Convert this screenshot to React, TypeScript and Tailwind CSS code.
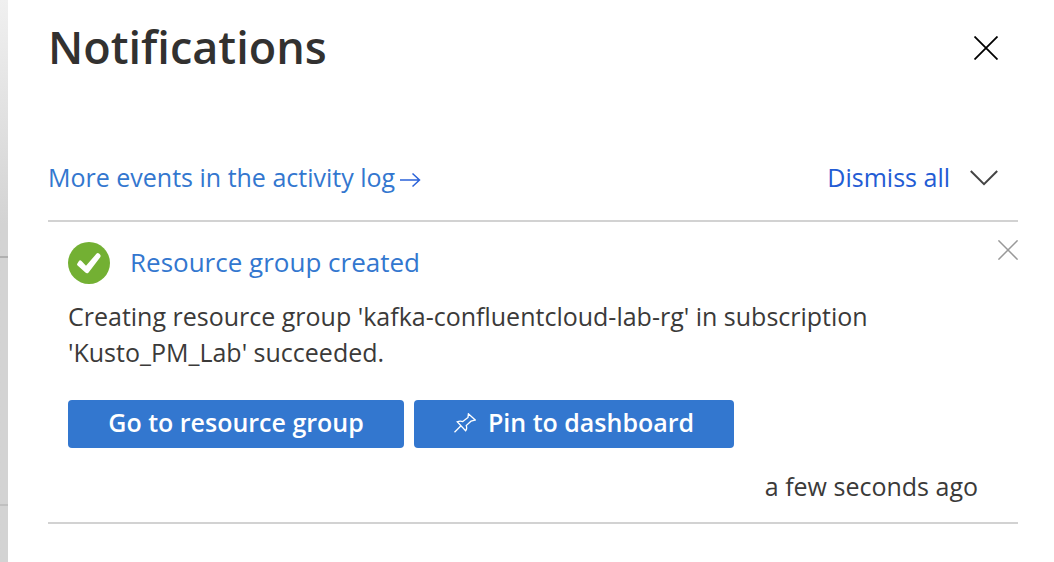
function CloseIcon({ className }: { className: string }) {
  return (
    <svg viewBox="0 0 24 24" className={className} fill="none" stroke="currentColor" aria-hidden="true">
      <path d="M0.5 0.5 23.5 23.5M23.5 0.5 0.5 23.5" strokeWidth="1.8" />
    </svg>
  );
}

function SuccessIcon() {
  return (
    <svg viewBox="0 0 42 42" className="size-[42px] shrink-0" role="img" aria-label="Success">
      <circle cx="21" cy="21" r="21" fill="#73b033" />
      <path
        d="M9.4 21.6 10.8 19.2Q12 17.6 13.5 19L18 23.8 28.4 11.8Q29.6 10.4 31 11.6L32 12.6Q33.2 13.8 32.2 15.2L20.6 30.4Q19 32.2 17.4 30.6L9.6 23.6Q8.6 22.6 9.4 21.6Z"
        fill="#fff"
      />
    </svg>
  );
}

function PinIcon() {
  return (
    <svg viewBox="0 0 22 20" className="h-5 w-[22px]" fill="none" stroke="currentColor" strokeWidth="1.3" aria-hidden="true">
      <path d="M0.5 19.3 7 12.8M3.2 8.8Q6 7.6 8.8 8.6L14 4.4 14.4 0.8 21.2 7 17 8.2 12.2 12.6Q13.4 15.6 11.6 17.8Z" />
    </svg>
  );
}

export default function App() {
  return (
    <div className="flex min-h-screen bg-white font-['Open_Sans','Noto_Sans',sans-serif] text-[25px] text-[#3b3a39]">
      <div className="flex w-2 shrink-0 flex-col bg-linear-to-b from-[#f0f0f0] to-[#d3d3d3] to-40%" aria-hidden="true">
        <div className="h-[258px] border-b-2 border-[#b0b0b0]" />
        <div className="h-[248px] border-b-2 border-[#c0c0c0]" />
      </div>
      <main className="min-w-0 flex-1 pr-9 pl-10">
        <header className="flex h-24 items-center justify-between pr-5">
          <h1 className="pb-0.5 text-[45px] font-semibold text-[#323130]">Notifications</h1>
          <button type="button" aria-label="Close notifications" className="text-black">
            <CloseIcon className="size-6" />
          </button>
        </header>
        <div className="mt-9 flex h-[90px] items-center justify-between border-b-2 border-[#d2d2d2] pt-1 pr-5">
          <a href="#activity-log" className="flex items-center gap-1 text-[#3377cf]">
            More events in the activity log
            <svg viewBox="0 0 22 16" className="mt-1 h-4 w-[22px]" fill="none" stroke="#2a62d9" strokeWidth="1.5" aria-hidden="true">
              <path d="M1 8H20.5M13.5 1.5 20.5 8 13.5 14.5" />
            </svg>
          </a>
          <div className="flex items-center gap-5">
            <button type="button" className="text-[#235cd4]">Dismiss all</button>
            <button type="button" aria-label="More dismiss options" className="text-[#444]">
              <svg viewBox="0 0 28 16" className="h-4 w-7" fill="none" stroke="currentColor" strokeWidth="2" aria-hidden="true">
                <path d="M0.8 1 14 14.2 27.2 1" />
              </svg>
            </button>
          </div>
        </div>
        <article className="border-b-2 border-[#d2d2d2] pb-[18px] pl-5">
          <div className="flex justify-between pt-5">
            <div className="flex items-center gap-5">
              <SuccessIcon />
              <a href="#resource-group" className="pb-0.5 text-[26px] leading-10 text-[#3377cf]">Resource group created</a>
            </div>
            <button type="button" aria-label="Dismiss notification" className="-mt-0.5 self-start text-[#999]">
              <CloseIcon className="size-5" />
            </button>
          </div>
          <p className="mt-3.5 max-w-[840px] leading-9">
            Creating resource group 'kafka-confluentcloud-lab-rg' in subscription 'Kusto_PM_Lab' succeeded.
          </p>
          <div className="mt-[30px] flex gap-2.5 font-semibold text-white">
            <button type="button" className="h-12 w-[336px] rounded-sm bg-[#3377cf] pb-0.5">Go to resource group</button>
            <button type="button" className="flex h-12 w-80 items-center justify-center gap-3 rounded-sm bg-[#3377cf] pb-0.5">
              <PinIcon />
              Pin to dashboard
            </button>
          </div>
          <p className="mt-5 pr-10 text-right leading-9">a few seconds ago</p>
        </article>
      </main>
    </div>
  );
}
